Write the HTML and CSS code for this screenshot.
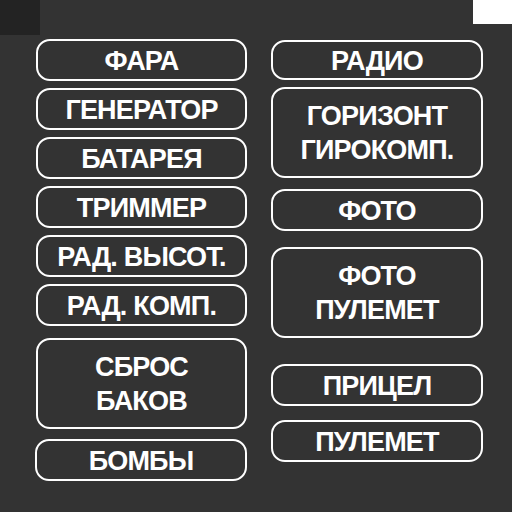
FILE: index.html
```html
<!DOCTYPE html>
<html lang="ru">
<head>
<meta charset="utf-8">
<link rel="stylesheet" href="styles.css">
</head>
<body>
<div class="screen">
  <div class="corner-dark"></div>
  <div class="corner-light"></div>
  <div class="panel">
    <div class="col col-left">
      <div class="btn">ФАРА</div>
      <div class="btn">ГЕНЕРАТОР</div>
      <div class="btn">БАТАРЕЯ</div>
      <div class="btn">ТРИММЕР</div>
      <div class="btn">РАД. ВЫСОТ.</div>
      <div class="btn">РАД. КОМП.</div>
      <div class="btn tall gap-12">СБРОС<br>БАКОВ</div>
      <div class="btn gap-10 shift">БОМБЫ</div>
    </div>
    <div class="col col-right">
      <div class="btn short">РАДИО</div>
      <div class="btn tall">ГОРИЗОНТ<br>ГИРОКОМП.</div>
      <div class="btn gap-11">ФОТО</div>
      <div class="btn tall gap-16">ФОТО<br>ПУЛЕМЕТ</div>
      <div class="btn gap-26">ПРИЦЕЛ</div>
      <div class="btn gap-14">ПУЛЕМЕТ</div>
    </div>
  </div>
</div>
</body>
</html>
```
FILE: styles.css
```css
html, body {
  margin: 0;
  padding: 0;
  background: #333333;
}
.screen {
  position: relative;
  width: 512px;
  height: 512px;
  background: #333333;
  overflow: hidden;
  font-family: "Liberation Sans", Arial, sans-serif;
  font-weight: bold;
  color: #ffffff;
}
.corner-dark {
  position: absolute;
  left: 0;
  top: 0;
  width: 40px;
  height: 35px;
  background: #232323;
}
.corner-light {
  position: absolute;
  right: 0;
  top: 0;
  width: 39px;
  height: 24px;
  background: #ffffff;
}
.panel {
  display: flex;
  padding: 39px 0 0 36px;
  gap: 24px;
}
.col {
  display: flex;
  flex-direction: column;
  gap: 7px;
}
.col-left {
  width: 211px;
}
.col-right {
  width: 212px;
  padding-top: 1px;
}
.btn {
  box-sizing: border-box;
  height: 42px;
  border: 2px solid #ffffff;
  border-radius: 14px;
  display: flex;
  align-items: center;
  justify-content: center;
  text-align: center;
  font-size: 27px;
  letter-spacing: -0.8px;
  line-height: 34px;
  padding-top: 1px;
  white-space: nowrap;
}
.btn.short {
  height: 40px;
}
.btn.tall {
  height: 91px;
  line-height: 34px;
  padding-top: 0;
}
.gap-10 { margin-top: 3px; }
.gap-11 { margin-top: 4px; }
.gap-12 { margin-top: 5px; }
.gap-14 { margin-top: 7px; }
.gap-16 { margin-top: 9px; }
.gap-26 { margin-top: 19px; }
.shift { margin-left: -1px; }
```
